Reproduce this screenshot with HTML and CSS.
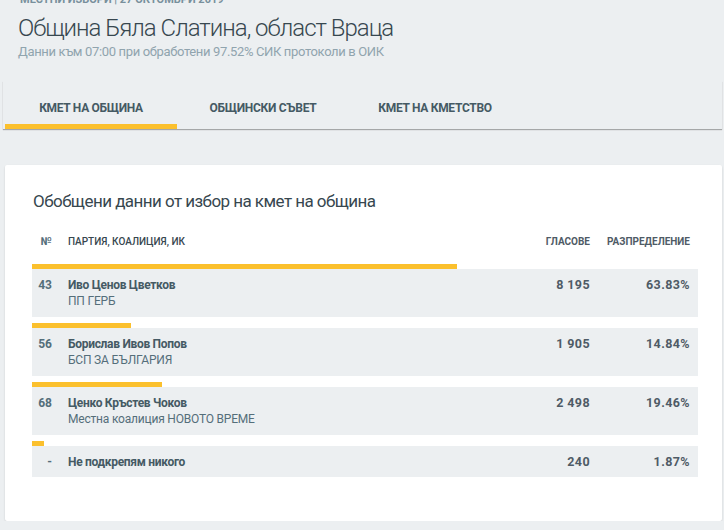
FILE: index.html
```html
<!DOCTYPE html>
<html lang="bg">
<head>
    <meta charset="UTF-8">
    <meta name="viewport" content="width=device-width, initial-scale=1.0">
    <title>Община Бяла Слатина, област Враца</title>
    <link rel="stylesheet" href="styles.css">
</head>
<body>
    <div class="page-head">
        <div class="overline">МЕСТНИ ИЗБОРИ | 27 ОКТОМВРИ 2019</div>
        <h1>Община Бяла Слатина, област Враца</h1>
        <div class="subtitle">Данни към 07:00 при обработени 97.52% СИК протоколи в ОИК</div>
    </div>

    <nav class="tabs">
        <a class="tab active">КМЕТ НА ОБЩИНА</a>
        <a class="tab">ОБЩИНСКИ СЪВЕТ</a>
        <a class="tab">КМЕТ НА КМЕТСТВО</a>
    </nav>

    <div class="card">
        <h2>Обобщени данни от избор на кмет на община</h2>

        <div class="results">
            <div class="row head">
                <div class="num">№</div>
                <div class="name">ПАРТИЯ, КОАЛИЦИЯ, ИК</div>
                <div class="val">ГЛАСОВЕ</div>
                <div class="val sorted">РАЗПРЕДЕЛЕНИЕ</div>
            </div>

            <div class="entry">
                <div class="bar" style="width: 63.83%"></div>
                <div class="row">
                    <div class="num">43</div>
                    <div class="name"><b>Иво Ценов Цветков</b><span>ПП ГЕРБ</span></div>
                    <div class="val">8 195</div>
                    <div class="val">63.83%</div>
                </div>
            </div>

            <div class="entry">
                <div class="bar" style="width: 14.84%"></div>
                <div class="row">
                    <div class="num">56</div>
                    <div class="name"><b>Борислав Ивов Попов</b><span>БСП ЗА БЪЛГАРИЯ</span></div>
                    <div class="val">1 905</div>
                    <div class="val">14.84%</div>
                </div>
            </div>

            <div class="entry">
                <div class="bar" style="width: 19.46%"></div>
                <div class="row">
                    <div class="num">68</div>
                    <div class="name"><b>Ценко Кръстев Чоков</b><span>Местна коалиция НОВОТО ВРЕМЕ</span></div>
                    <div class="val">2 498</div>
                    <div class="val">19.46%</div>
                </div>
            </div>

            <div class="entry">
                <div class="bar" style="width: 1.87%"></div>
                <div class="row single">
                    <div class="num">-</div>
                    <div class="name"><b>Не подкрепям никого</b></div>
                    <div class="val">240</div>
                    <div class="val">1.87%</div>
                </div>
            </div>
        </div>
    </div>
</body>
</html>
```

FILE: styles.css
```css
body {
    font-family: Roboto, "Noto Sans", sans-serif;
    background-color: #eceff1;
    margin: 0;
    color: #455a64;
}
.page-head { padding-left: 18px; }
.overline {
    margin-top: -7px;
    font-size: 11px;
    line-height: 14px;
    font-weight: 700;
    color: #78909c;
    margin-left: 2px;
}
h1 {
    margin: 6px 0 0;
    font-size: 24px;
    line-height: 30px;
    font-weight: 300;
    letter-spacing: -1px;
    color: #37474f;
}
.subtitle {
    font-size: 13px;
    line-height: 18px;
    letter-spacing: -0.35px;
    color: #90a4ae;
}

.tabs {
    display: flex;
    margin: 20px 2px 0 3px;
    padding-left: 2px;
    box-shadow: 0 1px 1px rgba(0, 0, 0, 0.3);
}
.tab {
    width: 172px;
    text-align: center;
    padding: 19px 0 8px;
    font-size: 12px;
    line-height: 16px;
    font-weight: 700;
    letter-spacing: -0.3px;
    color: #455a64;
    border-bottom: 5px solid transparent;
    cursor: pointer;
}
.tab.active { border-bottom-color: #fbc02d; }

.card {
    background: #fff;
    margin: 36px 2px 0 5px;
    padding: 24px 24px 38px 27px;
    box-shadow: 0 1px 2px rgba(0, 0, 0, 0.15);
    border-radius: 2px;
}
h2 {
    margin: 0 0 19px 1px;
    font-size: 17px;
    line-height: 24px;
    font-weight: 400;
    letter-spacing: -0.55px;
    color: #37474f;
}

.row {
    display: grid;
    grid-template-columns: 36px 1fr 100px 100px;
    padding-right: 8px;
    background: #eceff1;
    font-size: 12px;
    line-height: 16px;
}
.row > div { padding: 8px 0; }
.row.single > div { padding: 7.5px 0; }
.row.head {
    background: none;
    font-size: 10px;
    line-height: 20px;
    font-weight: 500;
    color: #37474f;
    margin-bottom: 12px;
}
.row.head > div { padding: 0; }
.row.head .sorted { font-weight: 700; }
.row.head .num { font-size: 11px; }
.num {
    text-align: right;
    padding-right: 16px !important;
    font-weight: 700;
    color: #546e7a;
}
.name b { display: block; font-weight: 700; color: #455a64; letter-spacing: -0.3px; }
.name span { display: block; color: #546e7a; letter-spacing: -0.2px; }
.val {
    text-align: right;
    font-weight: 700;
    font-size: 12.5px;
    letter-spacing: 0.4px;
    color: #4f5b66;
}
.row.head .val { font-size: 10px; letter-spacing: 0; }

.entry { margin-bottom: 6px; }
.bar { height: 5px; background: #fbc02d; }
```
